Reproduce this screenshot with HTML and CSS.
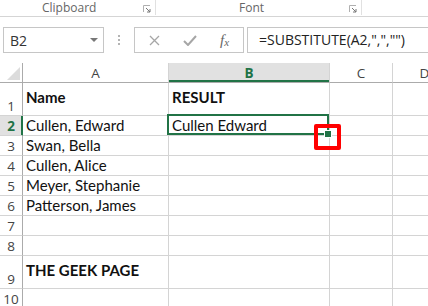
FILE: index.html
```html
<!DOCTYPE html>
<html lang="en">
<head>
    <meta charset="UTF-8">
    <title>Excel - SUBSTITUTE</title>
    <link rel="stylesheet" href="styles.css">
</head>
<body>
    <!-- ribbon group labels -->
    <div class="ribbon">
        <div class="group group-clipboard">
            <span class="group-label">Clipboard</span>
            <svg class="launcher" width="8" height="8" viewBox="0 0 8 8"><path d="M0.5 7V0.5H7" fill="none" stroke="#b0b0b0"/><path d="M3 3L7 7M7 4V7H4" fill="none" stroke="#777"/></svg>
        </div>
        <div class="group group-font">
            <span class="group-label">Font</span>
            <svg class="launcher" width="8" height="8" viewBox="0 0 8 8"><path d="M0.5 7V0.5H7" fill="none" stroke="#b0b0b0"/><path d="M3 3L7 7M7 4V7H4" fill="none" stroke="#777"/></svg>
        </div>
    </div>

    <!-- name box + formula bar -->
    <div class="formula-bar">
        <div class="name-box">
            <span>B2</span>
            <svg width="8" height="5" viewBox="0 0 8 5"><path d="M0 0H8L4 4Z" fill="#777"/></svg>
        </div>
        <div class="grip"><i></i><i></i><i></i></div>
        <div class="fx-buttons">
            <svg class="btn-x" width="11" height="11" viewBox="0 0 11 11"><path d="M1 1L10 10M10 1L1 10" stroke="#a6a6a6" stroke-width="1.3"/></svg>
            <svg class="btn-ok" width="14" height="11" viewBox="0 0 14 11"><path d="M1 6L5 10L13 1" fill="none" stroke="#a6a6a6" stroke-width="2"/></svg>
            <span class="fx">f<sub>x</sub></span>
        </div>
        <div class="formula-input">=SUBSTITUTE(A2,",","")</div>
    </div>

    <!-- worksheet -->
    <div class="sheet">
        <div class="hd corner"><svg width="13" height="13" viewBox="0 0 13 13"><path d="M0 13L13 0V13Z" fill="#dcdcdc"/></svg></div>
        <div class="hd col">A</div>
        <div class="hd col active">B</div>
        <div class="hd col">C</div>
        <div class="hd col">D</div>

        <div class="hd row">1</div>
        <div class="cell bold tall">Name</div>
        <div class="cell bold tall">RESULT</div>
        <div class="cell"></div>
        <div class="cell"></div>

        <div class="hd row active">2</div>
        <div class="cell">Cullen, Edward</div>
        <div class="cell selected">Cullen Edward
            <span class="fill-handle"></span>
            <span class="mark"></span>
        </div>
        <div class="cell"></div>
        <div class="cell"></div>

        <div class="hd row">3</div>
        <div class="cell">Swan, Bella</div>
        <div class="cell"></div>
        <div class="cell"></div>
        <div class="cell"></div>

        <div class="hd row">4</div>
        <div class="cell">Cullen, Alice</div>
        <div class="cell"></div>
        <div class="cell"></div>
        <div class="cell"></div>

        <div class="hd row">5</div>
        <div class="cell">Meyer, Stephanie</div>
        <div class="cell"></div>
        <div class="cell"></div>
        <div class="cell"></div>

        <div class="hd row">6</div>
        <div class="cell">Patterson, James</div>
        <div class="cell"></div>
        <div class="cell"></div>
        <div class="cell"></div>

        <div class="hd row">7</div>
        <div class="cell"></div>
        <div class="cell"></div>
        <div class="cell"></div>
        <div class="cell"></div>

        <div class="hd row">8</div>
        <div class="cell"></div>
        <div class="cell"></div>
        <div class="cell"></div>
        <div class="cell"></div>

        <div class="hd row">9</div>
        <div class="cell bold tall">THE GEEK PAGE</div>
        <div class="cell"></div>
        <div class="cell"></div>
        <div class="cell"></div>

        <div class="hd row">10</div>
        <div class="cell"></div>
        <div class="cell"></div>
        <div class="cell"></div>
        <div class="cell"></div>
    </div>
</body>
</html>
```

FILE: styles.css
```css
/* excel 2013 look */
* {
    box-sizing: border-box;
}

body {
    margin: 0;
    width: 428px;
    height: 306px;
    overflow: hidden;
    background: #fff;
    font-family: "Open Sans", "Liberation Sans", sans-serif;
    color: #222;
}

/* ribbon labels */
.ribbon {
    display: flex;
    height: 17px;
    border-bottom: 1px solid #d5d5d5;
}

.group {
    display: flex;
    align-items: flex-start;
    height: 15px;
    border-right: 1px solid #e1e1e1;
}

.group-clipboard {
    width: 156px;
    padding-left: 42px;
}

.group-font {
    width: 206px;
    padding-left: 83px;
}

.group-label {
    font-size: 12px;
    line-height: 15px;
    color: #666;
}

.launcher {
    margin-left: auto;
    margin-right: 4px;
    margin-top: 5px;
}

/* name box and formula */
.formula-bar {
    display: flex;
    height: 26px;
    margin-top: 10px;
}

.name-box {
    display: flex;
    align-items: center;
    justify-content: space-between;
    width: 101px;
    margin-left: 3px;
    padding: 0 5px 0 6px;
    border: 1px solid #c6c6c6;
    font-size: 14px;
    color: #333;
}

.grip {
    display: flex;
    flex-direction: column;
    justify-content: center;
    align-items: center;
    gap: 2px;
    width: 30px;
}

.grip i {
    width: 2px;
    height: 2px;
    background: #b4b4b4;
}

.fx-buttons {
    display: flex;
    align-items: center;
    width: 110px;
    border: 1px solid #c6c6c6;
    padding-left: 14px;
}

.btn-ok {
    margin-left: 23px;
}

.fx {
    margin-left: 23px;
    font-family: "Liberation Serif", serif;
    font-style: italic;
    font-size: 15px;
    color: #666;
}

.fx sub {
    font-size: 11px;
    vertical-align: -1px;
}

.formula-input {
    flex: 1;
    margin-left: 3px;
    padding-left: 11px;
    border: 1px solid #c6c6c6;
    border-right: none;
    font-size: 14px;
    line-height: 24px;
    color: #222;
    white-space: nowrap;
}

/* grid */
.sheet {
    display: grid;
    grid-template-columns: 23px 146px 161px 63px 64px;
    grid-template-rows: 20px 33px repeat(7, 20px) 33px 20px;
    margin-top: 10px;
}

.hd {
    display: flex;
    align-items: flex-end;
    justify-content: center;
    font-size: 13.5px;
    line-height: 16px;
    color: #444;
    border-right: 1px solid #d4d4d4;
    border-bottom: 1px solid #d4d4d4;
    padding-bottom: 1px;
}

.corner {
    justify-content: flex-end;
    padding: 0 2px 2px 0;
    border-right-color: #ababab;
    border-bottom-color: #ababab;
}

.col {
    border-bottom-color: #ababab;
}

.col.active {
    background: #e1e1e1;
    color: #217346;
    font-weight: bold;
    box-shadow: inset 0 -2px 0 #217346;
}

.row {
    border-right-color: #ababab;
    padding-bottom: 1px;
}

.row.active {
    background: #e1e1e1;
    color: #217346;
    font-weight: bold;
    border-right-color: #217346;
    box-shadow: inset -1px 0 0 #217346;
}

.cell {
    display: flex;
    align-items: flex-end;
    padding: 0 0 2px 3px;
    font-family: Lato, "Liberation Sans", sans-serif;
    font-size: 15px;
    line-height: 15px;
    color: #111;
    white-space: nowrap;
    border-right: 1px solid #d4d4d4;
    border-bottom: 1px solid #d4d4d4;
}

.bold {
    font-weight: bold;
}

.tall {
    padding-bottom: 10px;
}

.selected {
    position: relative;
    overflow: visible;
}

.selected::before {
    content: "";
    position: absolute;
    top: -2px;
    left: -2px;
    right: 0;
    bottom: 0;
    border: 2px solid #217346;
}

.fill-handle {
    position: absolute;
    right: -2px;
    bottom: -2px;
    width: 6px;
    height: 6px;
    background: #217346;
    box-shadow: 0 0 0 1px #fff;
}

/* red highlight annotation */
.mark {
    position: absolute;
    left: 145px;
    top: 8px;
    width: 27px;
    height: 26px;
    border: 4px solid #f00;
    border-radius: 2px;
}
```
